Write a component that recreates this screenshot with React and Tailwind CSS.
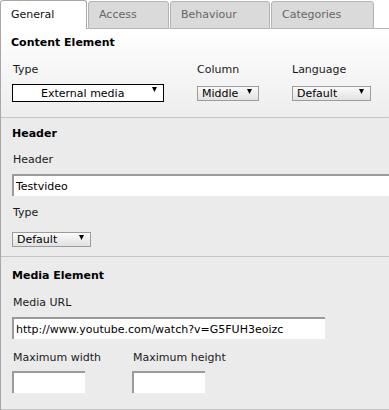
import React from "react";

const Arrow = () => (
  <svg width="5" height="5" viewBox="0 0 5 5" className="block shrink-0">
    <polygon points="0,0 5,0 2.5,5" fill="#000" />
  </svg>
);

const SmallSelect = ({ w, label, pr }) => (
  <div
    className={`${w} h-[15px] border border-[#9c9c9c] bg-linear-to-b from-[#fafafa] to-[#e2e2e2] flex items-start justify-between pl-[4px] ${pr}`}
  >
    <span className="leading-[13px] text-black">{label}</span>
    <span className="mt-[2px]">
      <Arrow />
    </span>
  </div>
);

const Tab = ({ children, active, w }) =>
  active ? (
    <div
      className={`${w} h-[29px] border-t border-l border-r border-[#a8a8a8] rounded-t-[3px] bg-white pl-[10px] pt-[7px] leading-[13px] text-[#111]`}
    >
      {children}
    </div>
  ) : (
    <div
      className={`${w} h-[28px] mt-[1px] border border-[#b4b4b4] rounded-t-[3px] bg-[#dadada] pl-[10px] pt-[6px] leading-[13px] text-[#666]`}
    >
      {children}
    </div>
  );

const Input = ({ w, value }) => (
  <div
    className={`${w} h-[22px] border-t-2 border-l-2 border-[#9a9a9a] bg-white pl-[2px] flex items-center`}
  >
    <span className="leading-[13px] text-black whitespace-nowrap">{value}</span>
  </div>
);

export default function App() {
  return (
    <div className="w-[389px] h-[410px] overflow-hidden bg-white font-['DejaVu_Sans',Verdana,sans-serif] text-[11px] text-[#1a1a1a]">
      <div className="w-[440px]">
        {/* Tabs */}
        <div className="flex items-start h-[29px]">
          <Tab active w="w-[87px]">General</Tab>
          <div className="w-[1px] h-[29px] border-b border-[#b4b4b4]" />
          <Tab w="w-[81px]">Access</Tab>
          <div className="w-[1px] h-[29px] border-b border-[#b4b4b4]" />
          <Tab w="w-[100px]">Behaviour</Tab>
          <div className="w-[1px] h-[29px] border-b border-[#b4b4b4]" />
          <Tab w="w-[103px]">Categories</Tab>
          <div className="flex-1 h-[29px] border-b border-[#b4b4b4]" />
        </div>

        {/* Panel */}
        <div className="border-l border-[#a8a8a8]">
          {/* Section 1 */}
          <div className="pl-[10px] pt-[7px] pb-[15px] border-b border-[#c4c4c4] bg-linear-to-b from-white to-[#ededed]">
            <div className="font-bold leading-[13px] text-black">Content Element</div>
            <div className="grid grid-cols-[186px_95px_auto] mt-[14px]">
              <div className="leading-[13px] pl-[2px]">Type</div>
              <div className="leading-[13px]">Column</div>
              <div className="leading-[13px]">Language</div>
            </div>
            <div className="grid grid-cols-[186px_95px_auto] items-center mt-[8px]">
              <div className="pl-[1px]">
                <div className="w-[152px] h-[18px] border border-black bg-white flex items-center justify-between pl-[28px] pr-[6px]">
                  <span className="leading-[13px] text-black">External media</span>
                  <span className="self-start mt-[2px]">
                    <Arrow />
                  </span>
                </div>
              </div>
              <div>
                <SmallSelect w="w-[62px]" label="Middle" pr="pr-[6px]" />
              </div>
              <div>
                <SmallSelect w="w-[79px]" label="Default" pr="pr-[6px]" />
              </div>
            </div>
          </div>

          {/* Section 2 */}
          <div className="pl-[11px] pt-[9px] pb-[9px] border-b border-[#c4c4c4] bg-[#ebebeb]">
            <div className="font-bold leading-[13px] text-black">Header</div>
            <div className="leading-[13px] mt-[13px] pl-[1px]">Header</div>
            <div className="mt-[8px]">
              <Input w="w-[420px]" value="Testvideo" />
            </div>
            <div className="leading-[13px] mt-[10px] pl-[1px]">Type</div>
            <div className="mt-[13px]">
              <SmallSelect w="w-[79px] h-[14px]" label="Default" pr="pr-[6px]" />
            </div>
          </div>

          {/* Section 3 */}
          <div className="pl-[11px] pt-[12px] pb-[16px] border-b border-[#c4c4c4] bg-[#ebebeb]">
            <div className="font-bold leading-[13px] text-black">Media Element</div>
            <div className="leading-[13px] mt-[14px] pl-[1px]">Media URL</div>
            <div className="mt-[8px]">
              <Input w="w-[313px]" value="http://www.youtube.com/watch?v=G5FUH3eoizc" />
            </div>
            <div className="flex mt-[12px]">
              <div className="w-[120px]">
                <div className="leading-[13px] pl-[1px]">Maximum width</div>
                <div className="mt-[7px]">
                  <Input w="w-[73px]" value="" />
                </div>
              </div>
              <div>
                <div className="leading-[13px] pl-[1px]">Maximum height</div>
                <div className="mt-[7px]">
                  <Input w="w-[73px]" value="" />
                </div>
              </div>
            </div>
          </div>
        </div>
      </div>
    </div>
  );
}
